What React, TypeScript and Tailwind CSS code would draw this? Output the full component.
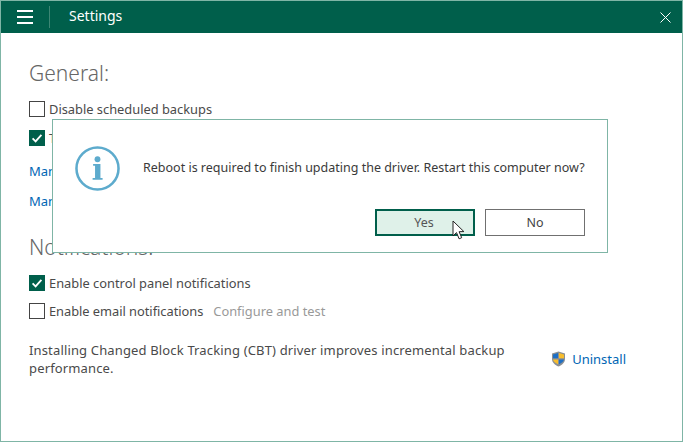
import React from "react";

const F = "[font-family:'Noto_Sans','Open_Sans',sans-serif]";

function Check({ on }: { on?: boolean }) {
  return on ? (
    <span className="w-4 h-4 bg-[#005f4b] flex items-center justify-center shrink-0">
      <svg width="16" height="16" viewBox="0 0 16 16"><path d="M3.6 8.4 6.6 11.4 12.4 4.8" fill="none" stroke="#fff" strokeWidth="1.8" /></svg>
    </span>
  ) : (
    <span className="w-4 h-4 border border-[#444] bg-white shrink-0" />
  );
}

function Row({ on, children, className = "" }: { on?: boolean; children: React.ReactNode; className?: string }) {
  return (
    <div className={`flex items-center gap-[3px] h-4 text-[12.85px] text-[#4a4a4a] ${className}`}>
      <Check on={on} />
      <span className="ml-[1px] pt-[2px] whitespace-nowrap flex items-center">{children}</span>
    </div>
  );
}

function Shield() {
  return (
    <svg width="15" height="16" viewBox="0 0 15 16">
      <path d="M7.5 0.5 14 2.5V8c0 3.5-3 6-6.5 7.5C4 14 1 11.5 1 8V2.5z" fill="#8b8f93" />
      <path d="M7 2 2 3.4V7.2h5z" fill="#1e6fc4" />
      <path d="M8 2l5 1.4v3.8H8z" fill="#f7bd2e" />
      <path d="M2 8.4h5v4.8C4.5 12 2.4 10.4 2 8.4z" fill="#f7bd2e" />
      <path d="M8 8.4h5c-.4 2-2.5 3.6-5 4.8z" fill="#1e6fc4" />
    </svg>
  );
}

export default function App() {
  return (
    <div className={`relative w-[683px] h-[442px] bg-white border border-[#7fb5a6] overflow-hidden ${F}`}>
      <header className="h-[32px] bg-[#005f4b] flex items-center text-white">
        <div className="w-[48px] h-full flex items-center pl-[16px]">
          <div className="w-4 flex flex-col gap-[4px]">
            <div className="h-[2px] bg-white" />
            <div className="h-[2px] bg-white" />
            <div className="h-[2px] bg-white" />
          </div>
        </div>
        <div className="w-px h-[22px] bg-[#3d8674]" />
        <div className="ml-[19px] mb-[2px] text-[14px] leading-none">Settings</div>
        <svg className="ml-auto mr-[11px]" width="11" height="11" viewBox="0 0 11 11">
          <path d="M.5.5 10.5 10.5M10.5.5 .5 10.5" stroke="#fff" strokeWidth="1" />
        </svg>
      </header>

      <main className="pl-[28px] pr-[56px]">
        <h2 className="mt-[26px] text-[21px] leading-[28px] font-light text-[#666]">General:</h2>
        <Row className="mt-[14px]">Disable scheduled backups</Row>
        <Row on className="mt-[13px]">Throttle backup activity when system is busy</Row>
        <a className="block mt-[17px] text-[13px] leading-4 text-[#0066b4]">Manage registered items</a>
        <a className="block mt-[14px] text-[13px] leading-4 text-[#0066b4]">Manage licensing options</a>
        <h2 className="mt-[24px] text-[21px] leading-[28px] font-light text-[#666]">Notifications:</h2>
        <Row on className="mt-[14px]">Enable control panel notifications</Row>
        <Row className="mt-[12px]">
          <span className="tracking-[-0.03px]">Enable email notifications</span>
          <span className="ml-[10px] text-[#999]">Configure and test</span>
        </Row>
        <div className="mt-[22px] flex justify-between items-start">
          <p className="w-[500px] text-[13px] tracking-[0.15px] leading-[18px] text-[#4a4a4a]">
            Installing Changed Block Tracking (CBT) driver improves incremental backup performance.
          </p>
          <div className="flex items-center gap-[6px] mt-[10px] text-[13px] leading-4 text-[#0066b4]">
            <Shield />
            Uninstall
          </div>
        </div>
      </main>

      <div className="absolute left-[51px] top-[118px] w-[556px] h-[134px] bg-white border border-[#7fb5a6]">
        <div className="flex items-center pt-[26px] pl-[22px]">
          <svg width="45" height="45" viewBox="0 0 46 46">
            <circle cx="23" cy="23" r="21.5" fill="none" stroke="#5dabcd" strokeWidth="2.6" />
            <circle cx="23" cy="13.5" r="3" fill="#5dabcd" />
            <path d="M18.5 18.5h7.5v14.2h2.2v1.8H18v-1.8h2.5v-12.4h-2z" fill="#5dabcd" />
          </svg>
          <p className="ml-[23px] text-[12.5px] text-[#3a3a3a] whitespace-nowrap">
            Reboot is required to finish updating the driver. Restart this computer now?
          </p>
        </div>
        <div className="flex justify-end gap-[10px] mt-[18px] pr-[22px]">
          <button className="relative w-[100px] h-[27px] pt-[1px] bg-[#dff1e9] border-2 border-[#005f4b] text-[12.5px] text-[#555]">
            <span className="mr-[2px]">Yes</span>
            <svg className="absolute left-[75px] top-[9px]" width="14" height="21" viewBox="0 0 14 21">
              <path d="M1 1v15l3.5-3.4 2.6 6.2 2.6-1.1-2.6-6 4.8-.1z" fill="#fff" stroke="#222" strokeWidth="1" />
            </svg>
          </button>
          <button className="w-[100px] h-[27px] pt-[1px] bg-white border border-[#707070] text-[12.5px] text-[#444]">No</button>
        </div>
      </div>
    </div>
  );
}
